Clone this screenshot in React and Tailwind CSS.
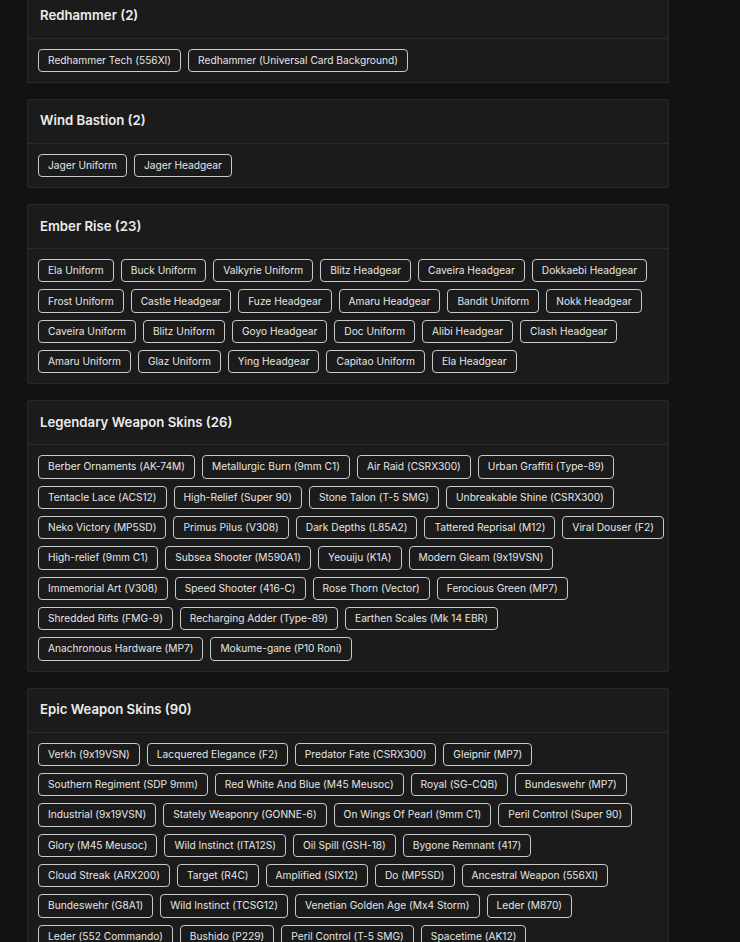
import React from "react";

// items are grouped by the line they wrap onto
const sections = [
  {
    title: "Redhammer",
    rows: [["Redhammer Tech (556XI)", "Redhammer (Universal Card Background)"]],
  },
  {
    title: "Wind Bastion",
    rows: [["Jager Uniform", "Jager Headgear"]],
  },
  {
    title: "Ember Rise",
    rows: [
      ["Ela Uniform", "Buck Uniform", "Valkyrie Uniform", "Blitz Headgear", "Caveira Headgear", "Dokkaebi Headgear"],
      ["Frost Uniform", "Castle Headgear", "Fuze Headgear", "Amaru Headgear", "Bandit Uniform", "Nokk Headgear"],
      ["Caveira Uniform", "Blitz Uniform", "Goyo Headgear", "Doc Uniform", "Alibi Headgear", "Clash Headgear"],
      ["Amaru Uniform", "Glaz Uniform", "Ying Headgear", "Capitao Uniform", "Ela Headgear"],
    ],
  },
  {
    title: "Legendary Weapon Skins",
    rows: [
      ["Berber Ornaments (AK-74M)", "Metallurgic Burn (9mm C1)", "Air Raid (CSRX300)", "Urban Graffiti (Type-89)"],
      ["Tentacle Lace (ACS12)", "High-Relief (Super 90)", "Stone Talon (T-5 SMG)", "Unbreakable Shine (CSRX300)"],
      ["Neko Victory (MP5SD)", "Primus Pilus (V308)", "Dark Depths (L85A2)", "Tattered Reprisal (M12)", "Viral Douser (F2)"],
      ["High-relief (9mm C1)", "Subsea Shooter (M590A1)", "Yeouiju (K1A)", "Modern Gleam (9x19VSN)"],
      ["Immemorial Art (V308)", "Speed Shooter (416-C)", "Rose Thorn (Vector)", "Ferocious Green (MP7)"],
      ["Shredded Rifts (FMG-9)", "Recharging Adder (Type-89)", "Earthen Scales (Mk 14 EBR)"],
      ["Anachronous Hardware (MP7)", "Mokume-gane (P10 Roni)"],
    ],
  },
  {
    title: "Epic Weapon Skins",
    count: 90,
    rows: [
      ["Verkh (9x19VSN)", "Lacquered Elegance (F2)", "Predator Fate (CSRX300)", "Gleipnir (MP7)"],
      ["Southern Regiment (SDP 9mm)", "Red White And Blue (M45 Meusoc)", "Royal (SG-CQB)", "Bundeswehr (MP7)"],
      ["Industrial (9x19VSN)", "Stately Weaponry (GONNE-6)", "On Wings Of Pearl (9mm C1)", "Peril Control (Super 90)"],
      ["Glory (M45 Meusoc)", "Wild Instinct (ITA12S)", "Oil Spill (GSH-18)", "Bygone Remnant (417)"],
      ["Cloud Streak (ARX200)", "Target (R4C)", "Amplified (SIX12)", "Do (MP5SD)", "Ancestral Weapon (556XI)"],
      ["Bundeswehr (G8A1)", "Wild Instinct (TCSG12)", "Venetian Golden Age (Mx4 Storm)", "Leder (M870)"],
      ["Leder (552 Commando)", "Bushido (P229)", "Peril Control (T-5 SMG)", "Spacetime (AK12)"],
      ["Jade Dragon (F2)", "Arctic Camo (L85A2)", "Crimson Tide (SPAS-12)", "Night Owl (P12)"],
    ],
  },
];

function Chip({ label }) {
  return (
    <span className="h-[23.33px] flex items-center px-[9px] border border-[#c9c9c9] rounded-[4px] text-[10.2px] text-[#e6e6e6] whitespace-nowrap proportional-nums [font-variant-ligatures:no-contextual]">
      {label}
    </span>
  );
}

function Section({ title, count, rows }) {
  const total = count ?? rows.reduce((n, r) => n + r.length, 0);
  return (
    <div className="bg-[#1b1b1b] border border-[#2a2a2a] rounded-[2px]">
      <div className="h-[44px] px-3 flex items-center border-b border-[#2a2a2a]">
        <h3 className="text-[13.2px] font-semibold text-[#ececec]">
          {title} ({total})
        </h3>
      </div>
      <div className="p-[10px] flex flex-col gap-[7px]">
        {rows.map((row, i) => (
          <div key={i} className="flex gap-[7px]">
            {row.map((item, j) => (
              <Chip key={j} label={item} />
            ))}
          </div>
        ))}
      </div>
    </div>
  );
}

export default function App() {
  return (
    <div className="h-[942px] overflow-hidden bg-[#121212] font-['Inter',sans-serif]">
      <div className="ml-[27px] w-[642px] -mt-[6.5px] flex flex-col gap-4">
        {sections.map((s, i) => (
          <Section key={i} {...s} />
        ))}
      </div>
    </div>
  );
}
